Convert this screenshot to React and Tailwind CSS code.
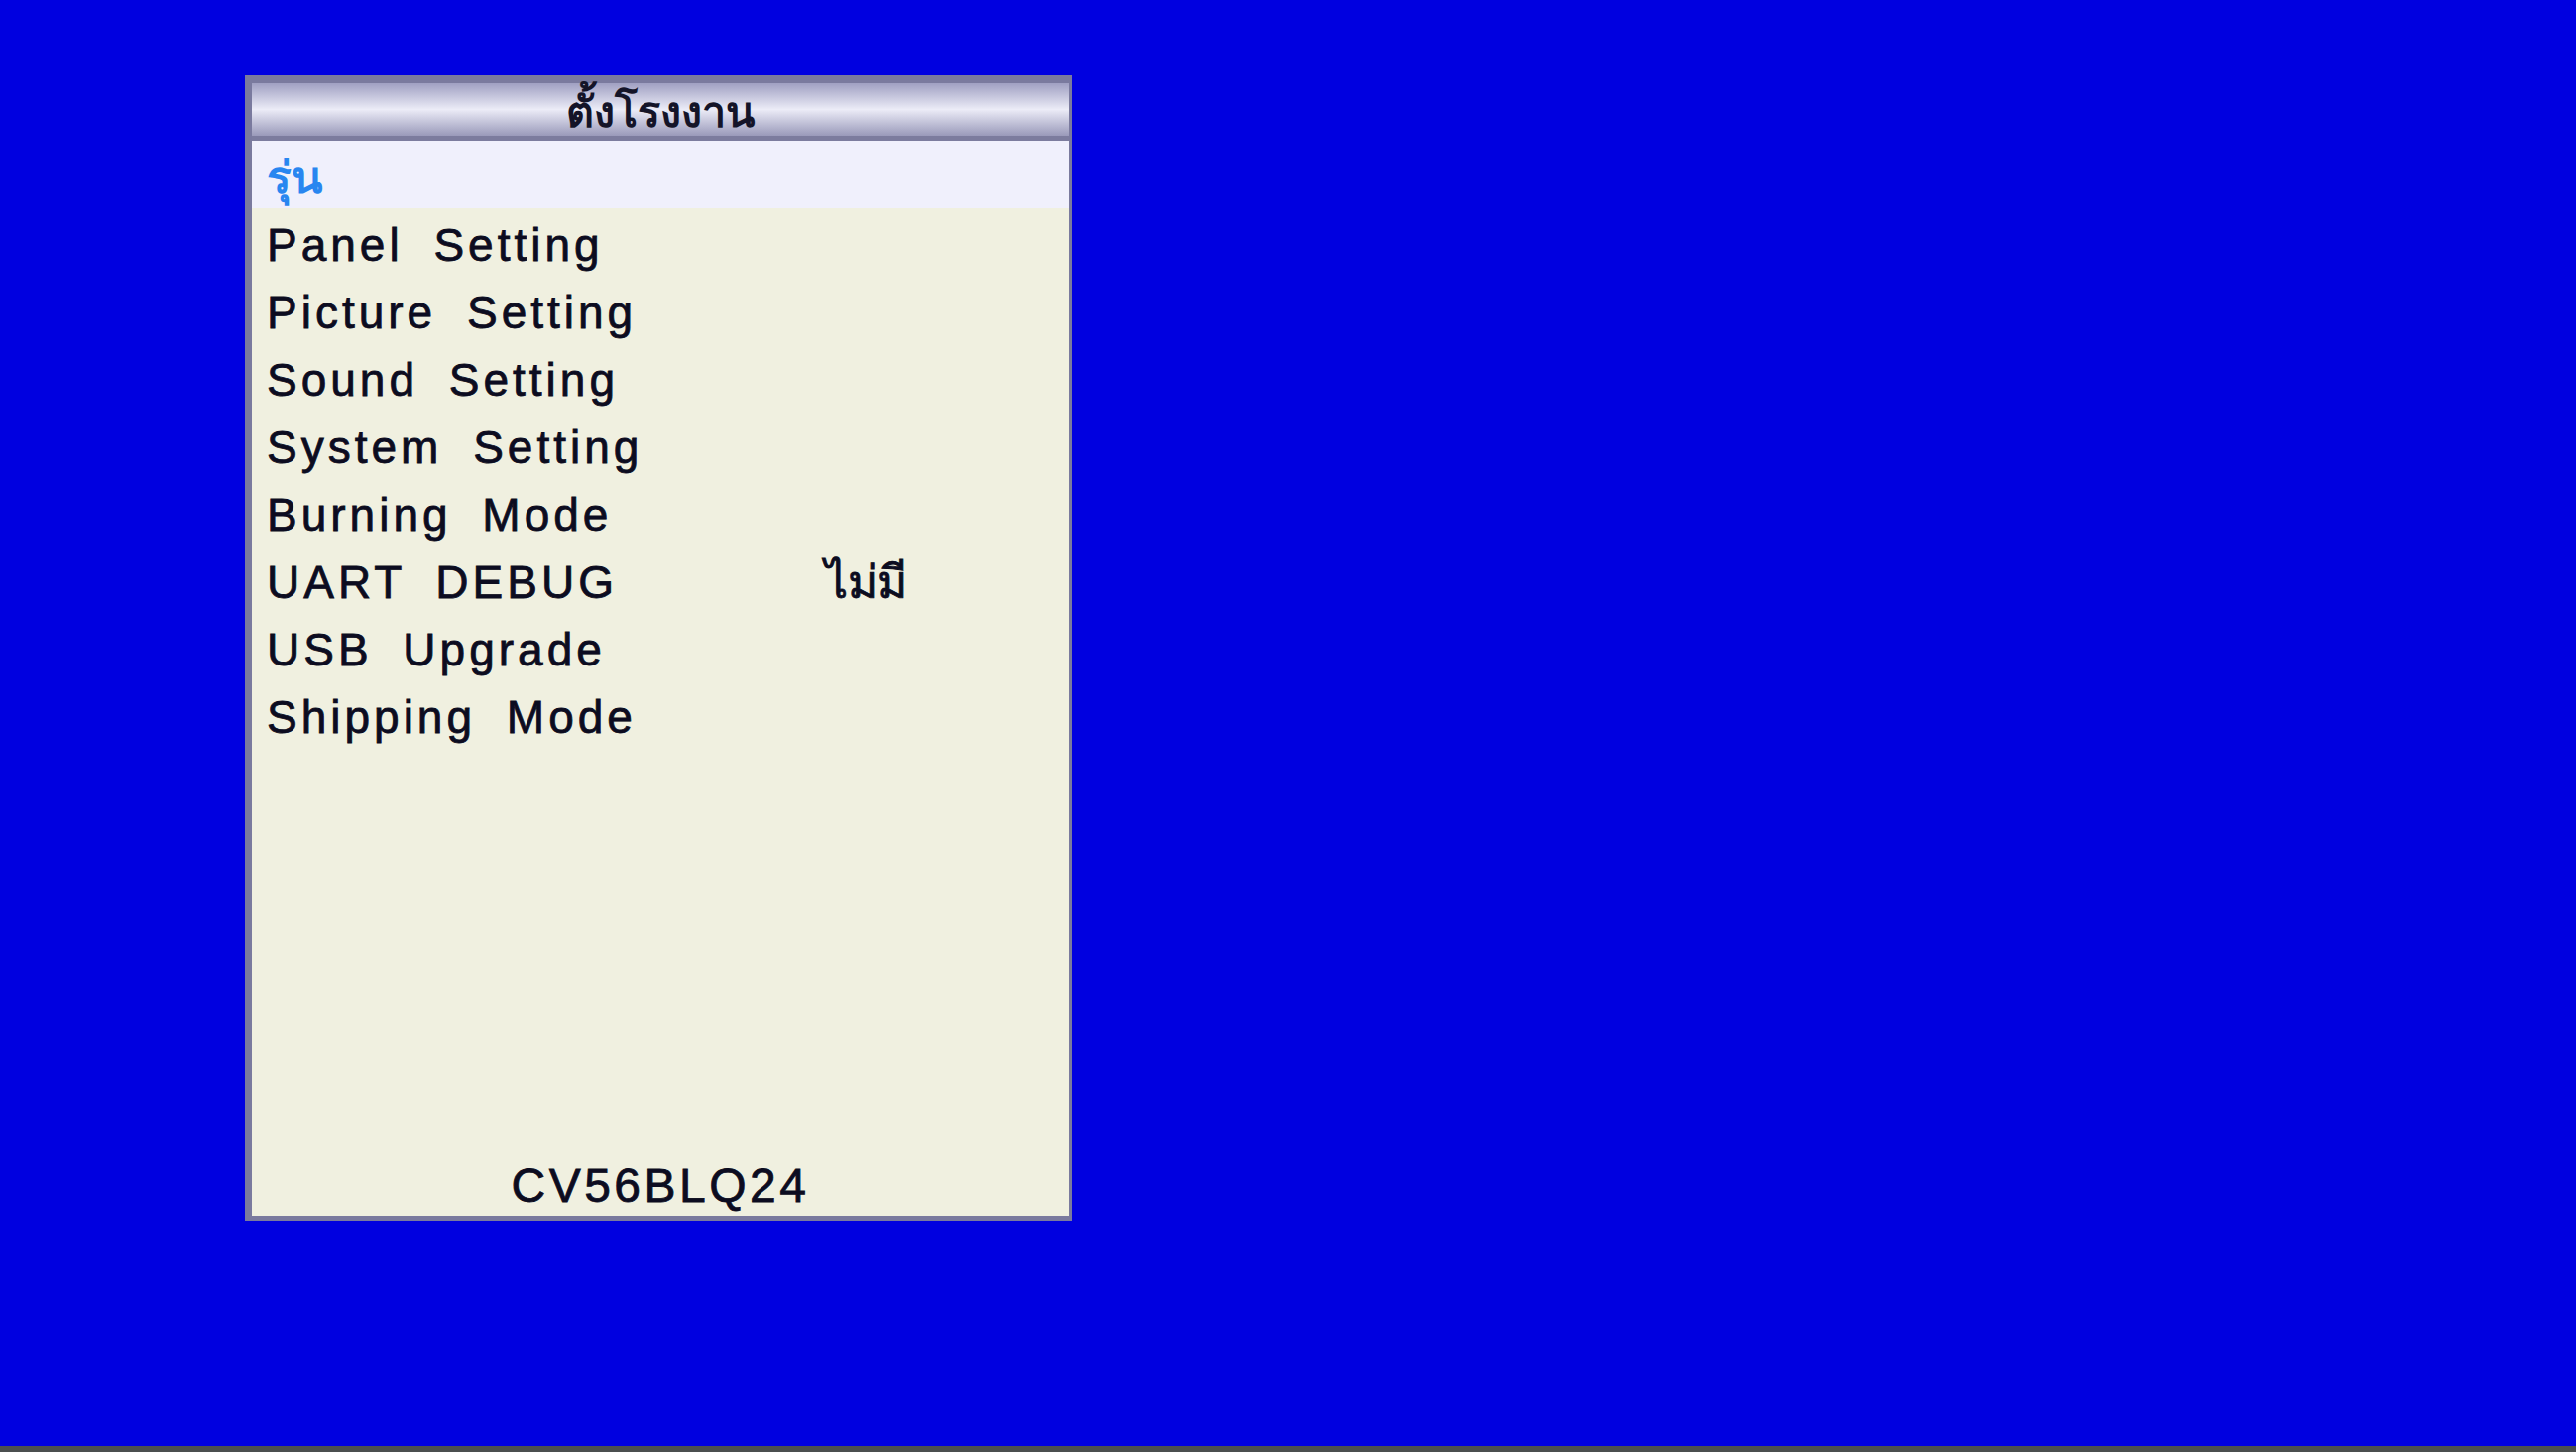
import React from 'react';

const items = [
  { label: 'Panel Setting' },
  { label: 'Picture Setting' },
  { label: 'Sound Setting' },
  { label: 'System Setting' },
  { label: 'Burning Mode' },
  { label: 'UART DEBUG', value: 'ไม่มี' },
  { label: 'USB Upgrade' },
  { label: 'Shipping Mode' },
];

const font = { fontFamily: '"Liberation Sans", Arial, "Noto Sans", sans-serif' };

const App = () => {
  return (
    <div className="h-screen w-full bg-[#0000e0] flex flex-col overflow-hidden" style={font}>
      <div className="flex-1 pl-[247px] pt-[76px]">
        <div className="w-[834px] h-[1155px] flex flex-col border-[#7a7a9e] border-l-[7px] border-t-[8px] border-r-[3px] border-b-[5px] bg-[#f0f0e0]">
          <div className="h-[53px] shrink-0 bg-gradient-to-b from-[#a0a0c2] via-[#ececf7] to-[#9a9aba] flex justify-center text-[43px] font-semibold leading-[58px] text-[#141428]">
            ตั้งโรงงาน
          </div>
          <div className="h-[5px] shrink-0 bg-[#7c7c9e]" />
          <div className="h-[68px] bg-[#f0f0fc] pl-[15px] text-[46px] font-semibold leading-[74px] text-[#2886f0]">รุ่น</div>
          {items.map((it) => (
            <div key={it.label} className="h-[68px] grid grid-cols-[578px_1fr] text-[46px] leading-[74px] text-[#0c0c20] tracking-[4px] [word-spacing:14px] [-webkit-text-stroke:0.8px_#0c0c20]">
              <span className="pl-[15px] whitespace-nowrap">{it.label}</span>
              <span className="tracking-normal whitespace-nowrap">{it.value}</span>
            </div>
          ))}
          <div className="flex-1 flex items-end justify-center pb-[6px]">
            <span className="text-[48px] leading-none tracking-[3.5px] text-[#0c0c20] [-webkit-text-stroke:0.8px_#0c0c20]">CV56BLQ24</span>
          </div>
        </div>
      </div>
      <div className="h-[6px] shrink-0 bg-[#4b4f4f]" />
    </div>
  );
};

export default App;
